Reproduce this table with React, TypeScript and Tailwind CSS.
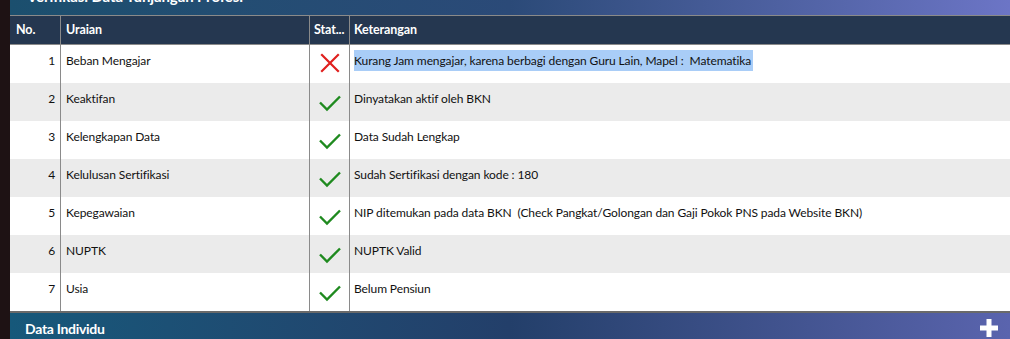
const rows = [
  { no: 1, uraian: "Beban Mengajar", ok: false, ket: "Kurang Jam mengajar, karena berbagi dengan Guru Lain, Mapel :  Matematika" },
  { no: 2, uraian: "Keaktifan", ok: true, ket: "Dinyatakan aktif oleh BKN" },
  { no: 3, uraian: "Kelengkapan Data", ok: true, ket: "Data Sudah Lengkap" },
  { no: 4, uraian: "Kelulusan Sertifikasi", ok: true, ket: "Sudah Sertifikasi dengan kode : 180" },
  { no: 5, uraian: "Kepegawaian", ok: true, ket: "NIP ditemukan pada data BKN  (Check Pangkat/Golongan dan Gaji Pokok PNS pada Website BKN)" },
  { no: 6, uraian: "NUPTK", ok: true, ket: "NUPTK Valid" },
  { no: 7, uraian: "Usia", ok: true, ket: "Belum Pensiun" },
];

const Cross = () => (
  <svg width="20" height="20" viewBox="0 0 20 20">
    <path d="M2 2 L18 18 M18 2 L2 18" stroke="#e0201e" strokeWidth="2.2" strokeLinecap="square" />
  </svg>
);

const Check = () => (
  <svg width="24" height="18" viewBox="0 0 24 18">
    <path d="M2 8.5 L9 15.5 L22 2.5" stroke="#1f8a1f" strokeWidth="2.4" fill="none" />
  </svg>
);

const Plus = () => (
  <svg width="18" height="18" viewBox="0 0 18 18">
    <path d="M6.5 0 H11.5 V6.5 H18 V11.5 H11.5 V18 H6.5 V11.5 H0 V6.5 H6.5 Z" fill="white" />
  </svg>
);

export default function App() {
  return (
    <div
      className="w-[1010px] h-[339px] bg-[#1e1214] pl-[10px] overflow-hidden flex flex-col text-[12px] tracking-[-0.1px] text-[#111]"
      style={{ fontFamily: "Lato, 'Open Sans', sans-serif" }}
    >
      <div className="h-[15px] bg-gradient-to-r from-[#1b4f6e] via-[#2b4a78] to-[#6c75c6] flex items-end pl-[17px] overflow-hidden">
        <span className="text-white font-bold text-[15px] leading-none translate-y-[-11px] whitespace-nowrap">Verifikasi Data Tunjangan Profesi</span>
      </div>
      <div className="bg-white border-t border-[#8a8a8a]">
        <div className="flex h-[29px] bg-[#253750] text-white font-bold text-[12.5px] border-b border-[#8a8a8a]">
          <div className="w-[50px] px-[6px] flex items-center">No.</div>
          <div className="w-[249px] px-[5px] flex items-center border-l border-[#8a8a8a]">Uraian</div>
          <div className="w-[40px] pl-[4px] flex items-center border-l border-[#8a8a8a] whitespace-nowrap">Stat...</div>
          <div className="flex-1 px-[4px] flex items-center border-l border-[#8a8a8a]">Keterangan</div>
        </div>
        {rows.map((r, i) => (
          <div key={r.no} className={`flex h-[38px] ${i % 2 ? "bg-[#ebebeb]" : "bg-white"}`}>
            <div className="w-[50px] pr-[5px] pt-[7px] text-right">{r.no}</div>
            <div className="w-[249px] px-[5px] pt-[7px] border-l border-[#8a8a8a]">{r.uraian}</div>
            <div className="w-[40px] border-l border-[#8a8a8a] flex justify-center pt-[8px]">
              {r.ok ? <div className="pt-[3px]"><Check /></div> : <Cross />}
            </div>
            <div className="flex-1 px-[4px] pt-[7px] border-l border-[#8a8a8a] whitespace-pre">
              {i === 0 ? <span className="bg-[#a9cdf7] py-[3px] pr-[2px]">{r.ket}</span> : r.ket}
            </div>
          </div>
        ))}
      </div>
      <div className="flex-1 border-t-2 border-[#6a6a6a] bg-gradient-to-r from-[#16587a] via-[#233f6a] to-[#5a64ae] flex items-center justify-between pl-[15px] pr-[12px]">
        <span className="text-white font-bold text-[14px] tracking-[-0.3px] pt-[4px]">Data Individu</span>
        <div className="pt-[3px]"><Plus /></div>
      </div>
    </div>
  );
}
